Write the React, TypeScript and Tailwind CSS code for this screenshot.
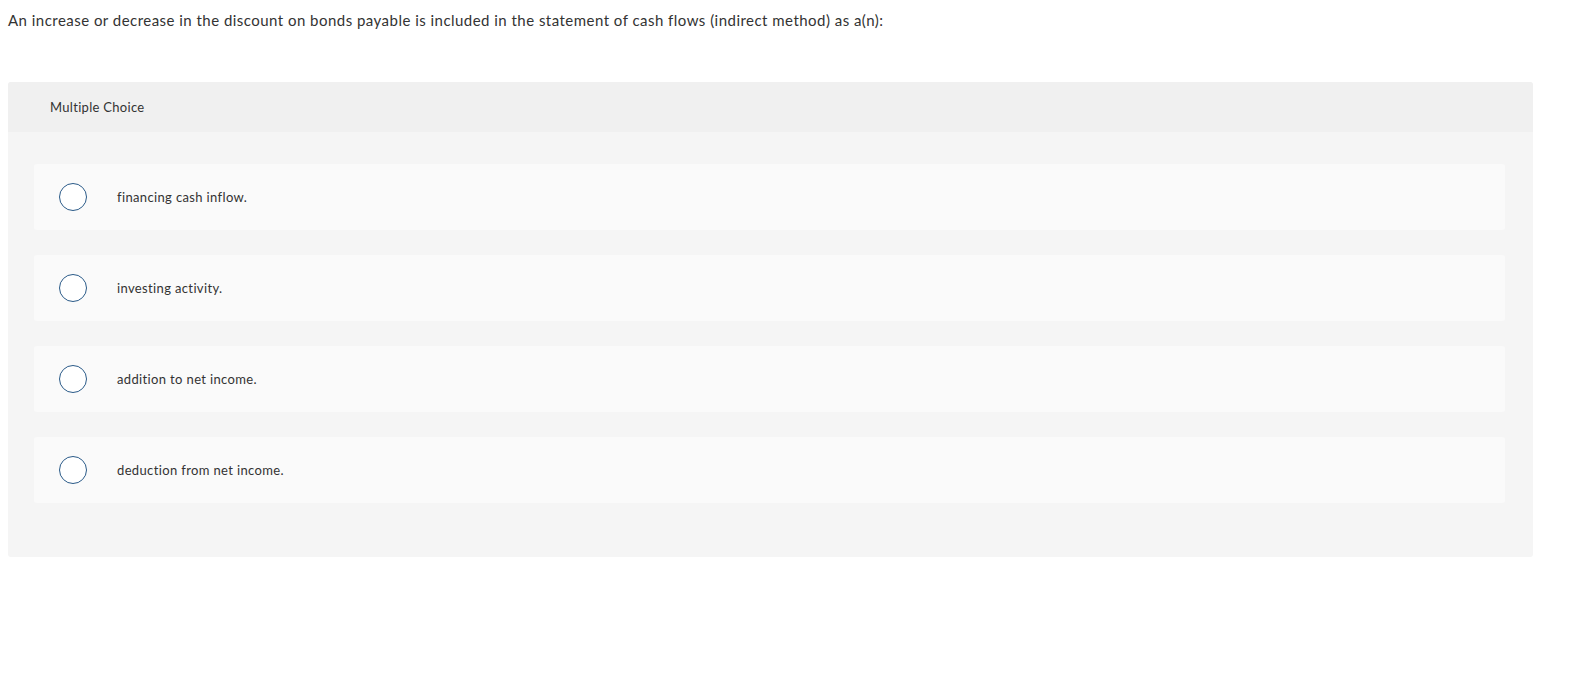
import React from "react";

const options = [
  "financing cash inflow.",
  "investing activity.",
  "addition to net income.",
  "deduction from net income.",
];

export default function App() {
  return (
    <div
      className="min-h-[695px] bg-white text-[#333333] [font-variant-ligatures:none]"
      style={{ fontFamily: "Lato, 'Open Sans', Arial, sans-serif" }}
    >
      <div className="pl-2 pr-[48px] pt-[10px]">
        <p className="text-[15px] leading-[20px] tracking-[0.47px] text-[#333333]">
          An increase or decrease in the discount on bonds payable is included in the statement of cash flows (indirect method) as a(n):
        </p>
        <div className="mt-[52px] rounded-[3px] bg-[#f5f5f5]">
          <div className="flex h-[50px] items-center rounded-t-[3px] bg-[#f0f0f0] pl-[42px] pt-[2px] text-[13px] tracking-[0.3px]">
            Multiple Choice
          </div>
          <div className="flex flex-col gap-[25px] pb-[54px] pl-[26px] pr-[28px] pt-[32px]">
            {options.map((o) => (
              <div key={o} className="flex h-[66px] items-center rounded-[3px] bg-[#fafafa] pl-[25px]">
                <span className="h-[28px] w-[28px] shrink-0 rounded-full border-[1.5px] border-[#2a5a88] bg-white" />
                <span className="ml-[30px] pt-[2px] text-[13px] tracking-[0.36px]">{o}</span>
              </div>
            ))}
          </div>
        </div>
      </div>
    </div>
  );
}
